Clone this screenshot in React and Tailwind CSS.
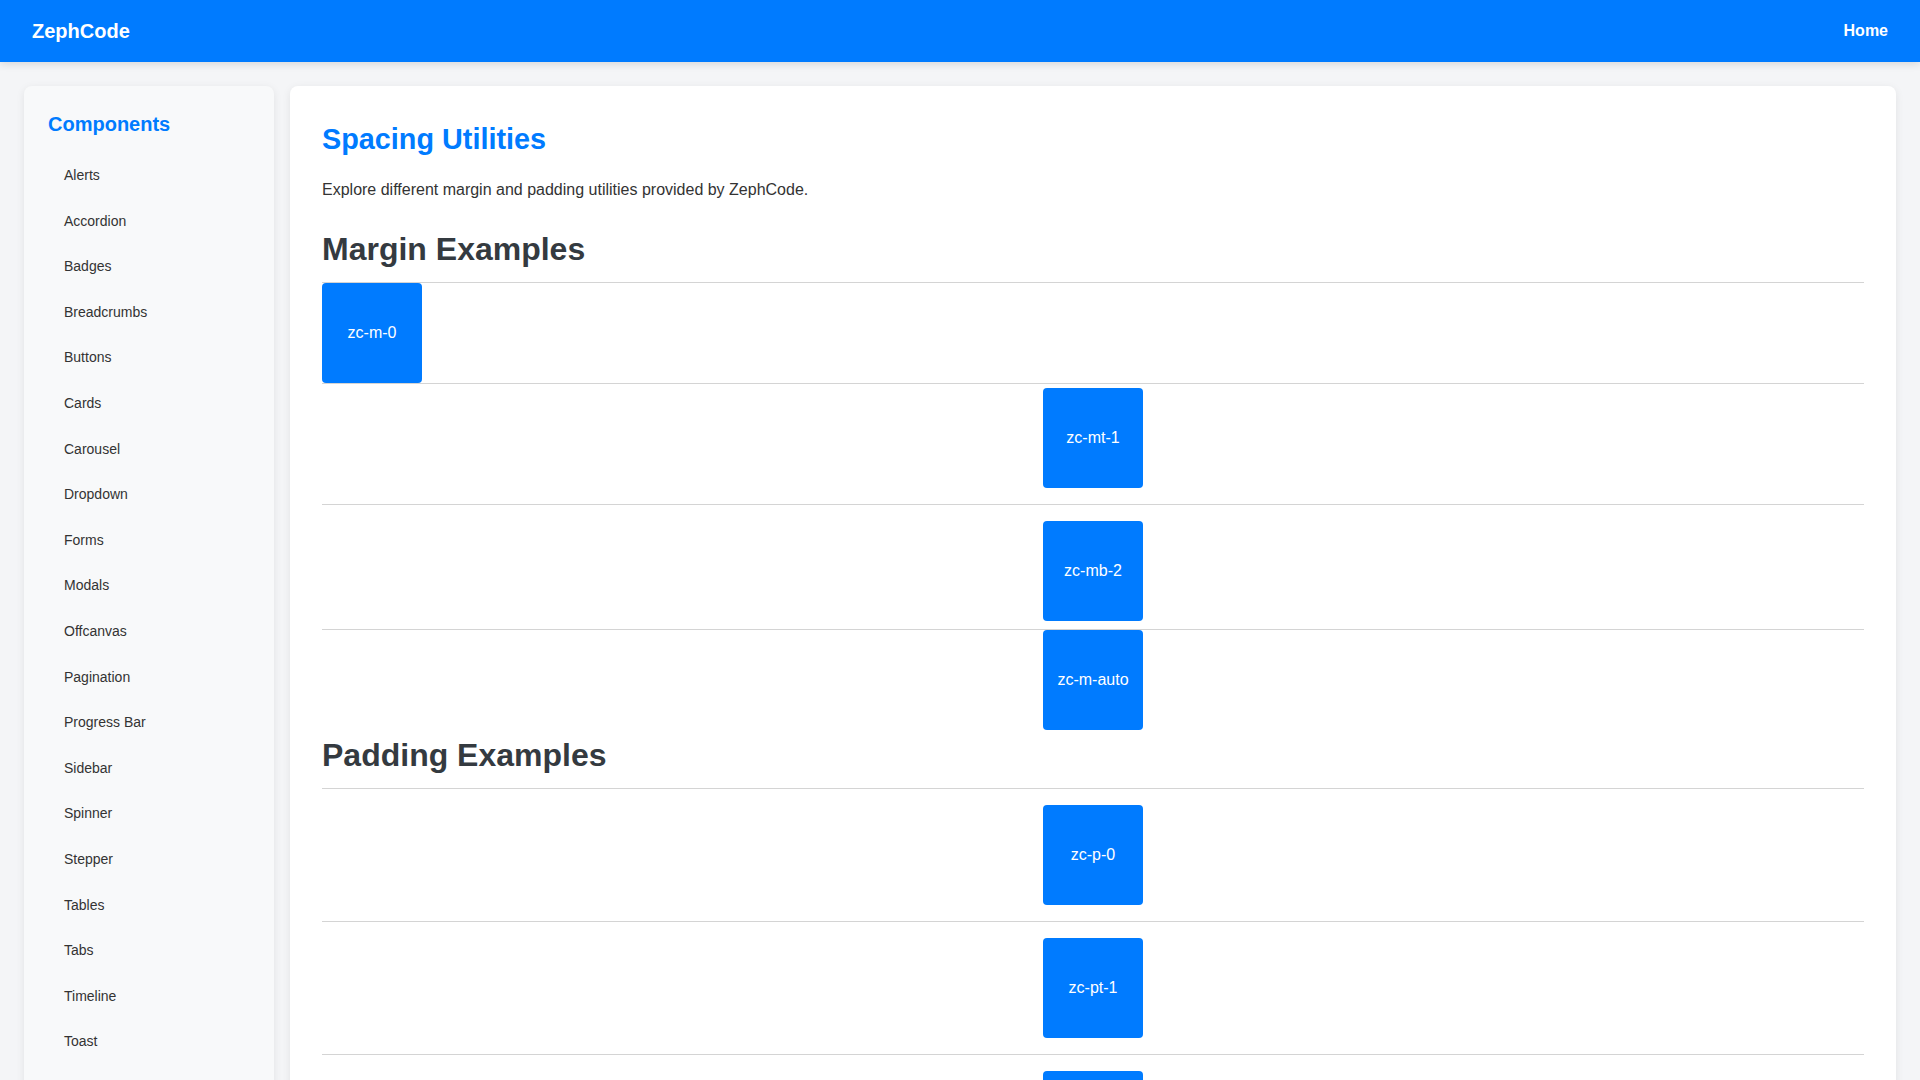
const sidebarItems = [
  'Alerts', 'Accordion', 'Badges', 'Breadcrumbs', 'Buttons', 'Cards', 'Carousel',
  'Dropdown', 'Forms', 'Modals', 'Offcanvas', 'Pagination', 'Progress Bar',
  'Sidebar', 'Spinner', 'Stepper', 'Tables', 'Tabs', 'Timeline', 'Toast', 'Tooltip',
];

// margin demos: box margins mimic the utility each one shows
const marginDemos = [
  { label: 'zc-m-0', box: 'm-0' },
  { label: 'zc-mt-1', box: 'mt-1 mb-4 mx-auto' },
  { label: 'zc-mb-2', box: 'mt-4 mb-2 mx-auto' },
  { label: 'zc-m-auto', box: 'my-0 mx-auto' },
];

const paddingDemos = [
  { label: 'zc-p-0' },
  { label: 'zc-pt-1' },
  { label: 'zc-pb-2' },
  { label: 'zc-px-3' },
];

const DemoBox = ({ label, className }) => (
  <div className={`w-[100px] h-[100px] bg-[#007bff] rounded-[4px] flex items-center justify-center text-white text-base ${className}`}>
    {label}
  </div>
);

const App = () => {
  return (
    <div className="min-h-screen bg-[#f4f5f7] text-[#333] font-['Liberation_Sans',Arial,sans-serif]">
      {/* Navbar */}
      <nav className="h-[62px] bg-[#007bff] flex items-center justify-between px-8 shadow-[0_2px_8px_rgba(0,0,0,0.12)]">
        <span className="text-white font-bold text-[20px]">ZephCode</span>
        <a href="#" className="text-white font-bold text-base">Home</a>
      </nav>

      <div className="flex gap-4 px-6 pt-6 pb-6">
        {/* Sidebar */}
        <aside className="w-[250px] shrink-0 bg-[#f8f9fa] rounded-lg shadow-[0_2px_8px_rgba(0,0,0,0.08)] p-6">
          <h3 className="text-[20px] leading-[28px] font-bold text-[#007bff] mb-[15px]">Components</h3>
          <ul>
            {sidebarItems.map((item) => (
              <li key={item}>
                <a href="#" className="block px-4 py-3 text-sm leading-[21.6px] text-[#333]">{item}</a>
              </li>
            ))}
          </ul>
        </aside>

        {/* Main */}
        <main className="flex-1 bg-white rounded-lg shadow-[0_2px_8px_rgba(0,0,0,0.08)] p-8">
          <h1 className="text-[28.8px] leading-[42px] font-bold text-[#007bff] mb-[18px]">Spacing Utilities</h1>
          <p className="text-base leading-6 text-[#333]">Explore different margin and padding utilities provided by ZephCode.</p>

          <h2 className="text-[32px] leading-[38.4px] font-bold text-[#343a40] mt-7 mb-[14px]">Margin Examples</h2>
          {marginDemos.map((d) => (
            <div key={d.label} className="border-t border-[#d4d4d4] flow-root">
              <DemoBox label={d.label} className={d.box} />
            </div>
          ))}

          <h2 className="text-[32px] leading-[38.4px] font-bold text-[#343a40] mt-[6px] mb-[13px]">Padding Examples</h2>
          {paddingDemos.map((d) => (
            <div key={d.label} className="border-t border-[#d4d4d4] flow-root">
              <DemoBox label={d.label} className="my-4 mx-auto" />
            </div>
          ))}
        </main>
      </div>
    </div>
  );
};

export default App;
